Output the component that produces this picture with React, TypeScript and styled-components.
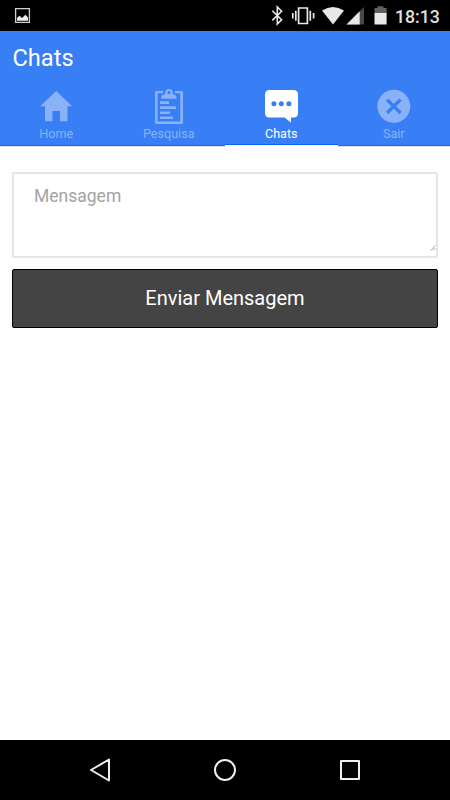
import React from "react";
import styled, { createGlobalStyle } from "styled-components";

const GlobalStyle = createGlobalStyle`
  body { margin: 0; background: #fff; }
  *, *::before, *::after { box-sizing: border-box; }
`;

const Screen = styled.div`
  width: 450px;
  height: 800px;
  display: flex;
  flex-direction: column;
  overflow: hidden;
  background: #fff;
  font-family: Roboto, "Liberation Sans", sans-serif;
`;

const StatusBar = styled.div`
  flex: none;
  height: 31px;
  display: flex;
  justify-content: space-between;
  background: #000;
`;

const StatusIcons = styled.div`
  display: flex;
`;

const Clock = styled.span`
  width: 55px;
  padding-top: 1px;
  color: #e0e0e0;
  font-size: 17.7px;
  font-weight: 500;
  line-height: 32px;
`;

const Header = styled.header`
  flex: none;
  height: 115px;
  display: flex;
  flex-direction: column;
  background: #387ef5;
  box-shadow: 0 1px 0 #dfe3ea;
`;

const Title = styled.h1`
  margin: 0;
  height: 54px;
  padding-left: 12.5px;
  color: #fff;
  font-size: 23.6px;
  font-weight: 400;
  line-height: 55px;
`;

const Tabs = styled.nav`
  flex: 1;
  display: grid;
  grid-template-columns: repeat(4, 1fr);
`;

const Tab = styled.button<{ $active?: boolean }>`
  display: flex;
  flex-direction: column;
  align-items: center;
  padding: 3px 0 0;
  border: 0;
  box-shadow: ${(p) =>
    p.$active
      ? "inset 0 -1px 0 #fff, inset 0 -2px 0 #0c63ee, 0 1px 0 #fff"
      : "inset 0 -1px 0 #1a6bf0"};
  background: transparent;
  color: ${(p) => (p.$active ? "#fff" : "#8ab2f9")};
  font: 400 12.6px/18px Roboto, sans-serif;
`;

const TabIcon = styled.svg`
  display: block;
  width: 36px;
  height: 37px;
`;

const Content = styled.main`
  flex: 1;
  display: flex;
  flex-direction: column;
  gap: 11px;
  padding: 26px 12px 0;
`;

const MessageBox = styled.div`
  position: relative;
  width: 426px;
  height: 86px;
`;

const Message = styled.textarea`
  display: block;
  width: 100%;
  height: 100%;
  padding: 11px 20px;
  border: 2px solid #e6e6e6;
  border-radius: 2px;
  outline: 0;
  resize: none;
  color: #444;
  font: 400 17.5px/22px Roboto, sans-serif;
  &::placeholder { color: #a3a3a3; opacity: 1; }
`;

const Grip = styled.svg`
  position: absolute;
  right: 2px;
  bottom: 7px;
  width: 6px;
  height: 6px;
  fill: none;
  stroke: #aaa;
`;

const SendButton = styled.button`
  width: 426px;
  height: 59px;
  padding: 0;
  border: 1px solid #000;
  border-radius: 2px;
  background: #444;
  color: #fff;
  font: 400 20px/57px Roboto, sans-serif;
`;

const NavBar = styled.div`
  flex: none;
  height: 60px;
  display: flex;
  justify-content: center;
  align-items: center;
  gap: 95px;
  background: #000;
`;

const NavIcon = styled.svg`
  width: 30px;
  height: 30px;
  fill: none;
  stroke: #eee;
  stroke-width: 2;
  stroke-linejoin: round;
`;

const HomeIcon = () => (
  <TabIcon viewBox="38 88 36 37" fill="currentColor">
    <path d="M56.2 91 72.2 106.3H67.5V121.3H60V111H52.5V121.3H45V106.3H40.2Z" />
  </TabIcon>
);

const ClipboardIcon = () => (
  <TabIcon viewBox="151 88 36 37" fill="currentColor">
    <path
      fillRule="evenodd"
      d="M156.5 91H163V93.3H157.6V121.4H180.3V93.3H175V91H181.5Q183 91 183 92.5V122.4Q183 124 181.5 124H156.5Q155 124 155 122.4V92.5Q155 91 156.5 91Z"
    />
    <path
      fillRule="evenodd"
      d="M161 98.7Q161 94.8 164.6 94.5Q165.2 94.3 165.2 92.8A3.8 3.8 0 0 1 172.8 92.8Q172.8 94.3 173.4 94.5Q176.6 94.8 176.6 98.7ZM169 91A1.6 1.6 0 1 0 169 94.2A1.6 1.6 0 1 0 169 91Z"
    />
    <path d="M160 101.2h9v2.7h-9zM160 106.3h16v2.7h-16zM160 111.4h10v2.6h-10zM160 116.4h13v2.6h-13z" />
  </TabIcon>
);

const ChatIcon = () => (
  <TabIcon viewBox="263 88 36 37" fill="currentColor">
    <path d="M269.5 90H293.5Q298 90 298 94.5V113Q298 117.5 293.5 117.5H291V122.5L284.5 117.5H269.5Q265 117.5 265 113V94.5Q265 90 269.5 90Z" />
    <g fill="#387ef5">
      <circle cx="273.9" cy="103.7" r="2.5" />
      <circle cx="281.3" cy="103.7" r="2.5" />
      <circle cx="288.9" cy="103.7" r="2.5" />
    </g>
  </TabIcon>
);

const CloseIcon = () => (
  <TabIcon viewBox="376 88 36 37" fill="currentColor">
    <circle cx="393.8" cy="106.3" r="16.5" />
    <path d="M387.1 99.6 400.5 113M400.5 99.6 387.1 113" stroke="#387ef5" strokeWidth="3.4" />
  </TabIcon>
);

const tabs = [
  { label: "Home", Icon: HomeIcon },
  { label: "Pesquisa", Icon: ClipboardIcon },
  { label: "Chats", Icon: ChatIcon, active: true },
  { label: "Sair", Icon: CloseIcon },
];

export default function App() {
  return (
    <Screen>
      <GlobalStyle />
      <StatusBar>
        <svg width="40" height="31" fill="none" stroke="#d0d0d0">
          <path d="M15.6 8.6H29.4V22.4H15.6Z" strokeWidth="1.3" />
          <path d="M17 20.8V18L19.5 15.7 22 18 25.5 14.8 28 17.5V20.8Z" fill="#eee" stroke="none" />
        </svg>
        <StatusIcons>
          <svg width="125" height="31" viewBox="270 0 125 31" fill="#e8e8e8">
            <path d="M272.3 10.8 281.6 19.8 277.3 24V7L281.6 11.2 272.3 20.4" fill="none" stroke="#e8e8e8" strokeWidth="1.6" />
            <path d="M298.6 8H307.4V23.5H298.6ZM292.8 13V18.5M295.8 10.8V20.8M310.3 10.8V20.8M313.6 13V18.5" fill="none" stroke="#e8e8e8" strokeWidth="1.7" />
            <path d="M322 10.5Q333 3.5 344 10.5L333 24.5Z" />
            <path d="M346.5 24.5 364 7V24.5Z" fill="#484848" />
            <path d="M346.5 24.5 359.7 11.3V24.5Z" />
            <path d="M374.5 8H377.5V6.3H383.5V8H386.6V13H374.5Z" fill="#606060" />
            <path d="M374.5 13H386.6V24.5H374.5Z" />
          </svg>
          <Clock>18:13</Clock>
        </StatusIcons>
      </StatusBar>
      <Header>
        <Title>Chats</Title>
        <Tabs>
          {tabs.map(({ label, Icon, active }) => (
            <Tab key={label} $active={active}>
              <Icon />
              {label}
            </Tab>
          ))}
        </Tabs>
      </Header>
      <Content>
        <MessageBox>
          <Message placeholder="Mensagem" />
          <Grip viewBox="0 0 6 6">
            <path d="M0.5 5.5 5.5 0.5M3 5.5 5.5 3" />
          </Grip>
        </MessageBox>
        <SendButton>Enviar Mensagem</SendButton>
      </Content>
      <NavBar>
        <NavIcon viewBox="85 755 30 30">
          <path d="M91 770 109 759.5V780.5Z" />
        </NavIcon>
        <NavIcon viewBox="210 755 30 30">
          <circle cx="225" cy="770" r="10" />
        </NavIcon>
        <NavIcon viewBox="335 755 30 30">
          <path d="M341 761H359V779H341Z" />
        </NavIcon>
      </NavBar>
    </Screen>
  );
}
